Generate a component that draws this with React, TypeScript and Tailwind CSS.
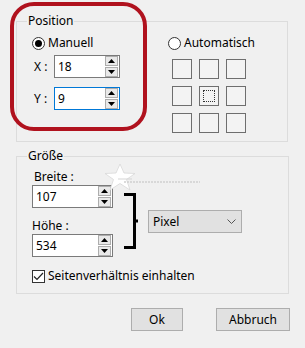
import React from "react";

const Spinner = () => (
  <div className="flex flex-col gap-[1px] mr-[1px]">
    <div className="w-[13px] h-[10px] border border-[#adadad] bg-[#e9e9e9] flex items-center justify-center">
      <svg width="7" height="4" viewBox="0 0 7 4">
        <path d="M3.5 0L7 4H0Z" fill="#000" />
      </svg>
    </div>
    <div className="w-[13px] h-[10px] border border-[#adadad] bg-[#e9e9e9] flex items-center justify-center">
      <svg width="7" height="4" viewBox="0 0 7 4">
        <path d="M0 0H7L3.5 4Z" fill="#000" />
      </svg>
    </div>
  </div>
);

const NumberBox = ({ value, width, focused }: { value: string; width: string; focused?: boolean }) => (
  <div
    className={`${width} h-[23px] bg-white border flex items-center justify-between pl-[3px] ${
      focused ? "border-[#0078d7]" : "border-[#7a7a7a]"
    }`}
  >
    <span>{value}</span>
    <Spinner />
  </div>
);

const Radio = ({ checked, label }: { checked?: boolean; label: string }) => (
  <div className="h-[16px] flex items-center gap-[3px]">
    <div className="w-[13px] h-[13px] rounded-full border border-[#333333] bg-white flex items-center justify-center">
      {checked && <div className="w-[7px] h-[7px] rounded-full bg-black" />}
    </div>
    <span>{label}</span>
  </div>
);

const App = () => {
  return (
    <div
      className="relative w-[305px] h-[348px] bg-[#f0f0f0] text-black text-[12px] leading-[16px] overflow-hidden"
      style={{ fontFamily: '"Noto Sans", "Segoe UI", sans-serif' }}
    >
      <div className="pt-[13px]">
        <fieldset className="ml-[16px] w-[272px] h-[129px] border border-[#dcdcdc] p-0 m-0">
          <legend className="ml-[10px] px-[1px] leading-[16px]">Position</legend>
          <div className="flex pl-[15px] pt-[6px]">
            <div className="w-[136px] flex flex-col">
              <Radio checked label="Manuell" />
              <div className="flex items-center mt-[4px]">
                <span className="w-[22px] pl-[2px]">X :</span>
                <NumberBox value="18" width="w-[66px]" />
              </div>
              <div className="flex items-center mt-[9px]">
                <span className="w-[22px] pl-[2px]">Y :</span>
                <NumberBox value="9" width="w-[66px]" focused />
              </div>
            </div>
            <div className="flex flex-col">
              <Radio label="Automatisch" />
              <div className="grid grid-cols-3 gap-[7px] mt-[8px] ml-[4px] w-[74px]">
                {Array.from({ length: 9 }).map((_, i) => (
                  <div
                    key={i}
                    className="w-[20px] h-[20px] border border-[#6e6e6e] bg-[#f3f3f3] flex items-center justify-center"
                  >
                    {i === 4 && <div className="w-[12px] h-[12px] border border-dotted border-[#333333]" />}
                  </div>
                ))}
              </div>
            </div>
          </div>
        </fieldset>

        <fieldset className="ml-[16px] mt-[6px] w-[273px] h-[146px] border border-[#dcdcdc] p-0">
          <legend className="ml-[10px] px-[1px] leading-[16px]">Größe</legend>
          <div className="pl-[15px] pt-[5px]">
            <div className="flex">
              <div className="w-[81px] flex flex-col">
                <span className="h-[16px] pl-[2px]">Breite :</span>
                <NumberBox value="107" width="w-[81px]" />
                <span className="h-[16px] mt-[10px]">Höhe :</span>
                <NumberBox value="534" width="w-[81px]" />
              </div>
              <svg className="ml-[11px] mt-[24px]" width="14" height="56" viewBox="0 0 14 56">
                <path d="M0 1.5H10.5V54.5H0M10.5 28H14" fill="none" stroke="#000" strokeWidth="3" />
              </svg>
              <div className="ml-[10px] mt-[41px] w-[94px] h-[23px] border border-[#adadad] bg-[#e1e1e1] flex items-center justify-between pl-[4px] pr-[5px]">
                <span>Pixel</span>
                <svg width="9" height="5" viewBox="0 0 9 5">
                  <path d="M0.5 0.5L4.5 4.5L8.5 0.5" fill="none" stroke="#555" strokeWidth="1" />
                </svg>
              </div>
            </div>
            <div className="mt-[11px] h-[16px] flex items-center gap-[3px]">
              <div className="w-[13px] h-[13px] border border-[#333333] bg-white flex items-center justify-center">
                <svg width="11" height="9" viewBox="0 0 11 9">
                  <path d="M1 4.5L4 7.5L10 1" fill="none" stroke="#222" strokeWidth="1.2" />
                </svg>
              </div>
              <span>Seitenverhältnis einhalten</span>
            </div>
          </div>
        </fieldset>

        <div className="flex gap-[33px] ml-[131px] mt-[14px]">
          <div className="w-[52px] h-[23px] border border-[#adadad] bg-[#e1e1e1] flex items-center justify-center">Ok</div>
          <div className="w-[74px] h-[23px] border border-[#adadad] bg-[#e1e1e1] flex items-center justify-center">Abbruch</div>
        </div>
      </div>

      {/* red annotation frame */}
      <div className="absolute left-[10px] top-[2px] w-[137px] h-[129px] border-[4px] border-[#b0121e] rounded-[24px] pointer-events-none" />

      {/* watermark */}
      <svg className="absolute left-[102px] top-[163px] pointer-events-none" width="100" height="28" viewBox="0 0 100 28">
        <path
          d="M18 1L22 10L33 10.5L24.5 16.5L28 27L18 20.5L8 27L11.5 16.5L3 10.5L14 10Z"
          fill="#ffffff"
          stroke="#d8d8d8"
          strokeWidth="0.8"
        />
        <path d="M22 19H98" stroke="#cfcfcf" strokeWidth="1.5" strokeDasharray="2 1" />
        <path d="M16 16H30" stroke="#d5d5d5" strokeWidth="1" />
      </svg>
    </div>
  );
};

export default App;
